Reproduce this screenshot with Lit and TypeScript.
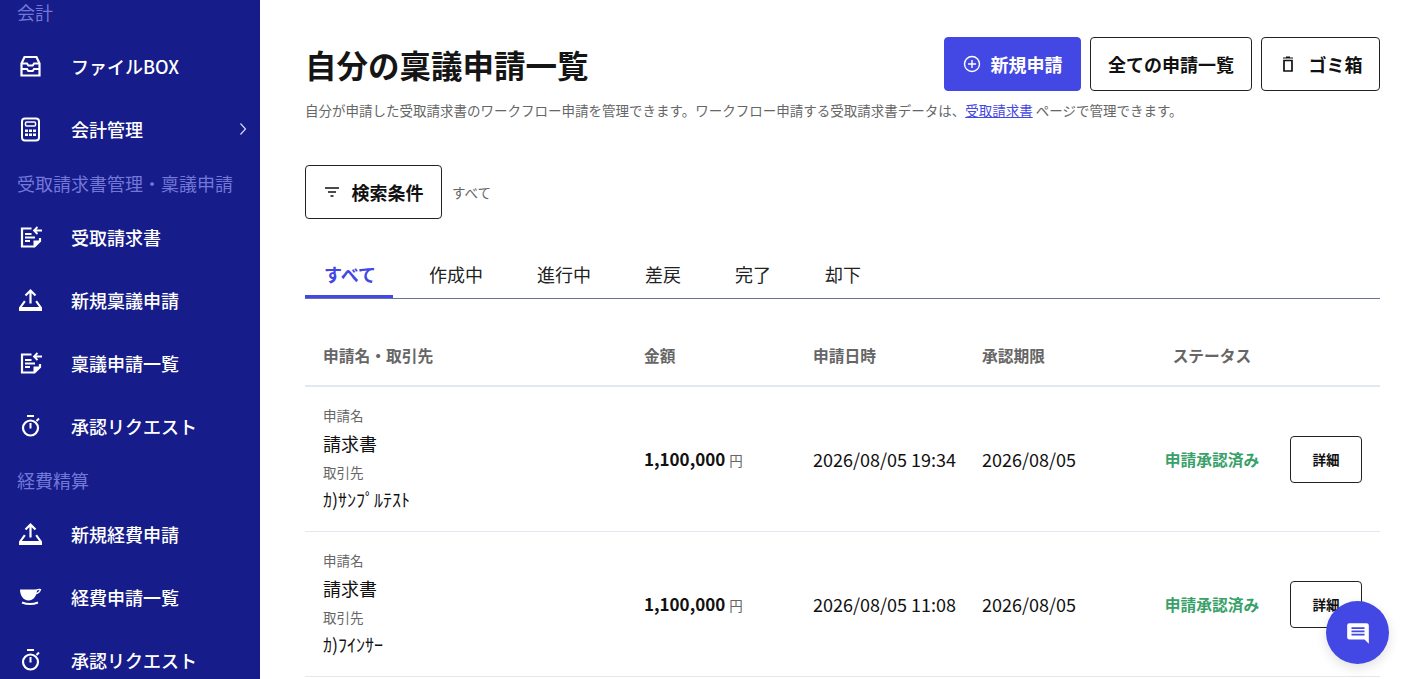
import { LitElement, html, css, svg } from 'lit';
import { customElement } from 'lit/decorators.js';

const icons: Record<string, unknown> = {
  box: svg`<path d="M6.500 3h12l3 6.500V21.500h-18V9.500z" fill="none" stroke="#fff" stroke-width="2.200"/><path d="M4 9.500h5l1.300 2h4.400l1.300-2h5M4 15h5l1.300 2h4.400l1.300-2h5" fill="none" stroke="#fff" stroke-width="2"/>`,
  calc: svg`<rect x="4" y="1.500" width="17" height="22" rx="3" fill="none" stroke="#fff" stroke-width="2"/><rect x="7.500" y="5" width="10" height="4" rx="1" fill="none" stroke="#fff" stroke-width="1.500"/><path d="M7 12.500h3V15H7zM11 12.500h3V15h-3zM15 12.500h3V15h-3zM7 16.500h3V19H7zM11 16.500h3V19h-3zM15 16.500h3V19h-3z" fill="#fff"/>`,
  doc: svg`<path d="M13.500 3.500H4v18h12.500L22 16v-3" fill="none" stroke="#fff" stroke-width="2.200"/><path d="M7 9h6.500M7 12.500h10M7 16h5" stroke="#fff" stroke-width="1.800"/><path d="M15.500 22.500V15.500H23z" fill="#fff"/><path d="M16 5.500h8M19.500 2l-3.500 3.500 3.500 3.500" fill="none" stroke="#fff" stroke-width="1.800"/>`,
  upload: svg`<path d="M12.500 15.500V3M7.500 7.500l5-5 5 5" fill="none" stroke="#fff" stroke-width="2.200"/><path d="M6 12.500 1 19.500v3.500h23v-3.500l-5-7-1.700 1.200 3.800 5.300H3.900l3.800-5.300z" fill="#fff"/>`,
  timer: svg`<circle cx="12.500" cy="14" r="7.500" fill="none" stroke="#fff" stroke-width="2.200"/><path d="M9 2h7M12.500 9v5.500M18.500 7l2.500-2.500" stroke="#fff" stroke-width="2" fill="none"/>`,
  cup: svg`<path d="M2 4.500H19C19 10 16 15.500 10.500 15.500 5 15.500 2 10 2 4.500z" fill="#fff"/><path d="M18 5.500c1.500-1 3-1.500 4.500-1-.5 2-2 3.500-5 4.500" fill="none" stroke="#fff" stroke-width="1.300"/><path d="M4 17.500c5 2 11 2 16 0" fill="none" stroke="#fff" stroke-width="2"/>`,
};

type NavEntry = { section?: string; label?: string; icon?: string; arrow?: boolean };

const nav: NavEntry[] = [
  { section: '会計' },
  { label: 'ファイルBOX', icon: 'box' },
  { label: '会計管理', icon: 'calc', arrow: true },
  { section: '受取請求書管理・稟議申請' },
  { label: '受取請求書', icon: 'doc' },
  { label: '新規稟議申請', icon: 'upload' },
  { label: '稟議申請一覧', icon: 'doc' },
  { label: '承認リクエスト', icon: 'timer' },
  { section: '経費精算' },
  { label: '新規経費申請', icon: 'upload' },
  { label: '経費申請一覧', icon: 'cup' },
  { label: '承認リクエスト', icon: 'timer' },
];

const tabs = ['すべて', '作成中', '進行中', '差戻', '完了', '却下'];

const rows = [
  { name: '請求書', partner: 'ｶ)ｻﾝﾌﾟﾙﾃｽﾄ', amount: '1,100,000', date: '2026/08/05 19:34', limit: '2026/08/05' },
  { name: '請求書', partner: 'ｶ)ﾌｲﾝｻｰ', amount: '1,100,000', date: '2026/08/05 11:08', limit: '2026/08/05' },
];

@customElement('app-root')
export class AppRoot extends LitElement {
  static styles = css`
    :host {
      display: flex;
      height: 100vh;
      overflow: hidden;
      background: #fff;
      color: #111;
      font-family: 'Noto Sans CJK JP', 'Noto Sans', sans-serif;
    }
    .side {
      width: 260px;
      flex: none;
      background: #161c8a;
      overflow: hidden;
    }
    .nav {
      margin-top: -10.5px;
    }
    .section {
      height: 45px;
      display: flex;
      align-items: center;
      padding-left: 17px;
      font-size: 18px;
      color: #7378d8;
    }
    .item {
      height: 63px;
      display: flex;
      align-items: center;
      padding-left: 18px;
      font-size: 18px;
      font-weight: 500;
      color: #fff;
    }
    .item svg.ico {
      width: 25px;
      height: 25px;
      margin-right: 28px;
      flex: none;
    }
    .item svg.arrow {
      width: 8px;
      height: 14px;
      margin-left: auto;
      margin-right: 13px;
    }
    .main {
      flex: 1;
      min-width: 0;
      padding: 37px 39px 0 45px;
    }
    .head {
      display: flex;
      justify-content: space-between;
      align-items: center;
      height: 54px;
    }
    h1 {
      margin: 0;
      font-size: 31.5px;
      line-height: 54px;
      font-weight: 700;
      color: #151515;
    }
    .actions {
      display: flex;
      gap: 9px;
    }
    .btn {
      height: 54px;
      box-sizing: border-box;
      display: flex;
      align-items: center;
      justify-content: center;
      border: 1px solid #222;
      border-radius: 4px;
      background: #fff;
      font-size: 18px;
      font-weight: 700;
      color: #111;
    }
    .btn.primary {
      width: 137px;
      background: #4347e3;
      border-color: #4347e3;
      color: #fff;
      gap: 10px;
    }
    .btn.all {
      width: 162px;
    }
    .btn.trash {
      width: 119px;
      gap: 15px;
      padding-left: 3px;
    }
    .btn.filter {
      width: 137px;
      gap: 12px;
    }
    .desc {
      margin: 10px 0 0;
      font-size: 13.5px;
      line-height: 18px;
      color: #666;
    }
    .desc a {
      color: #4347e3;
      text-decoration: underline;
    }
    .filters {
      margin-top: 46px;
      display: flex;
      align-items: center;
      gap: 10px;
    }
    .filters span {
      font-size: 13.5px;
      color: #666;
    }
    .tabs {
      margin-top: 33px;
      display: flex;
      gap: 20px;
      border-bottom: 1px solid #6a7299;
      height: 46px;
    }
    .tab {
      padding: 0 17px;
      font-size: 18px;
      line-height: 44px;
      height: 46px;
      box-sizing: border-box;
      color: #222;
    }
    .tab.on {
      padding: 0 17px 0 19px;
      margin-right: -1px;
      color: #4347e3;
      font-weight: 700;
      border-bottom: 3px solid #4347e3;
    }
    .grid {
      display: grid;
      grid-template-columns: 339px 169px 169px 171px 118px 109px;
      align-items: center;
    }
    .grid > * {
      min-width: 0;
    }
    .thead {
      margin-top: 28px;
      height: 60px;
      padding-bottom: 1px;
      box-sizing: border-box;
      border-bottom: 2px solid #e2e8f0;
      font-size: 15.75px;
      font-weight: 700;
      color: #666;
    }
    .thead div:first-child,
    .name {
      padding-left: 18px;
    }
    .thead .c,
    .status {
      text-align: center;
      white-space: nowrap;
    }
    .row {
      height: 145px;
      box-sizing: border-box;
      border-bottom: 1px solid #e2e8f0;
    }
    .name {
      padding-bottom: 2px;
    }
    .cap {
      font-size: 13.5px;
      line-height: 18px;
      color: #666;
    }
    .title {
      font-size: 18px;
      line-height: 30px;
      margin: 4px 0 5px;
    }
    .partner {
      font-size: 18px;
      line-height: 24px;
      margin-top: 6px;
    }
    .amount {
      font-size: 17px;
      font-weight: 700;
      padding-bottom: 2px;
    }
    .amount small {
      font-size: 13.5px;
      font-weight: 400;
      color: #666;
      margin-left: 4px;
    }
    .date {
      font-size: 18px;
      white-space: nowrap;
    }
    .status {
      font-size: 15.75px;
      font-weight: 700;
      color: #38a169;
    }
    .detail {
      justify-self: end;
      margin-right: 18px;
      width: 72px;
      height: 47px;
      box-sizing: border-box;
      display: flex;
      align-items: center;
      justify-content: center;
      border: 1px solid #222;
      border-radius: 4px;
      font-size: 13.5px;
      font-weight: 700;
    }
    .fab {
      position: fixed;
      left: 1326px;
      top: 601px;
      width: 63px;
      height: 63px;
      border-radius: 50%;
      background: #4347e3;
      display: flex;
      align-items: center;
      justify-content: center;
      box-shadow: 0 4px 12px rgba(0, 0, 0, 0.12);
    }
  `;

  render() {
    return html`
      <aside class="side">
        <div class="nav">
          ${nav.map((n) =>
            n.section
              ? html`<div class="section">${n.section}</div>`
              : html`<div class="item">
                  <svg class="ico" viewBox="0 0 25 25">${icons[n.icon!]}</svg>
                  ${n.label}
                  ${n.arrow
                    ? html`<svg class="arrow" viewBox="0 0 8 14"><path d="M1.500 1.500 6.500 7l-5 5.500" fill="none" stroke="#d8daf5" stroke-width="1.200"/></svg>`
                    : ''}
                </div>`
          )}
        </div>
      </aside>
      <main class="main">
        <div class="head">
          <h1>自分の稟議申請一覧</h1>
          <div class="actions">
            <div class="btn primary">
              <svg width="18" height="18" viewBox="0 0 18 18"><circle cx="9" cy="9" r="7.500" fill="none" stroke="#fff" stroke-width="1.400"/><path d="M9 5v8M5 9h8" stroke="#fff" stroke-width="1.400"/></svg>
              新規申請
            </div>
            <div class="btn all">全ての申請一覧</div>
            <div class="btn trash">
              <svg width="12" height="16" viewBox="0 0 12 16"><path d="M2 4.500h8V15H2z" fill="none" stroke="#111" stroke-width="1.700"/><path d="M1 2h10M4 1h4" stroke="#111" stroke-width="1.200"/></svg>
              ゴミ箱
            </div>
          </div>
        </div>
        <p class="desc">自分が申請した受取請求書のワークフロー申請を管理できます。ワークフロー申請する受取請求書データは、<a>受取請求書</a> ページで管理できます。</p>
        <div class="filters">
          <div class="btn filter">
            <svg width="16" height="12" viewBox="0 0 16 12"><path d="M1 2h14M4 6h8M6.500 10h3" stroke="#111" stroke-width="1.300"/></svg>
            検索条件
          </div>
          <span>すべて</span>
        </div>
        <div class="tabs">
          ${tabs.map((t, i) => html`<div class="tab ${i === 0 ? 'on' : ''}">${t}</div>`)}
        </div>
        <div class="grid thead">
          <div>申請名・取引先</div>
          <div>金額</div>
          <div>申請日時</div>
          <div>承認期限</div>
          <div class="c">ステータス</div>
          <div></div>
        </div>
        ${rows.map(
          (r) => html`
            <div class="grid row">
              <div class="name">
                <div class="cap">申請名</div>
                <div class="title">${r.name}</div>
                <div class="cap">取引先</div>
                <div class="partner">${r.partner}</div>
              </div>
              <div class="amount">${r.amount}<small>円</small></div>
              <div class="date">${r.date}</div>
              <div class="date">${r.limit}</div>
              <div class="status">申請承認済み</div>
              <div class="detail">詳細</div>
            </div>
          `
        )}
      </main>
      <div class="fab">
        <svg width="26" height="26" viewBox="0 0 24 24"><path d="M4 3h16a2 2 0 0 1 2 2v17l-4-4H4a2 2 0 0 1-2-2V5a2 2 0 0 1 2-2z" fill="#fff"/><path d="M6 7.500h12M6 10.500h12M6 13.500h12" stroke="#4347e3" stroke-width="1.700"/></svg>
      </div>
    `;
  }
}
